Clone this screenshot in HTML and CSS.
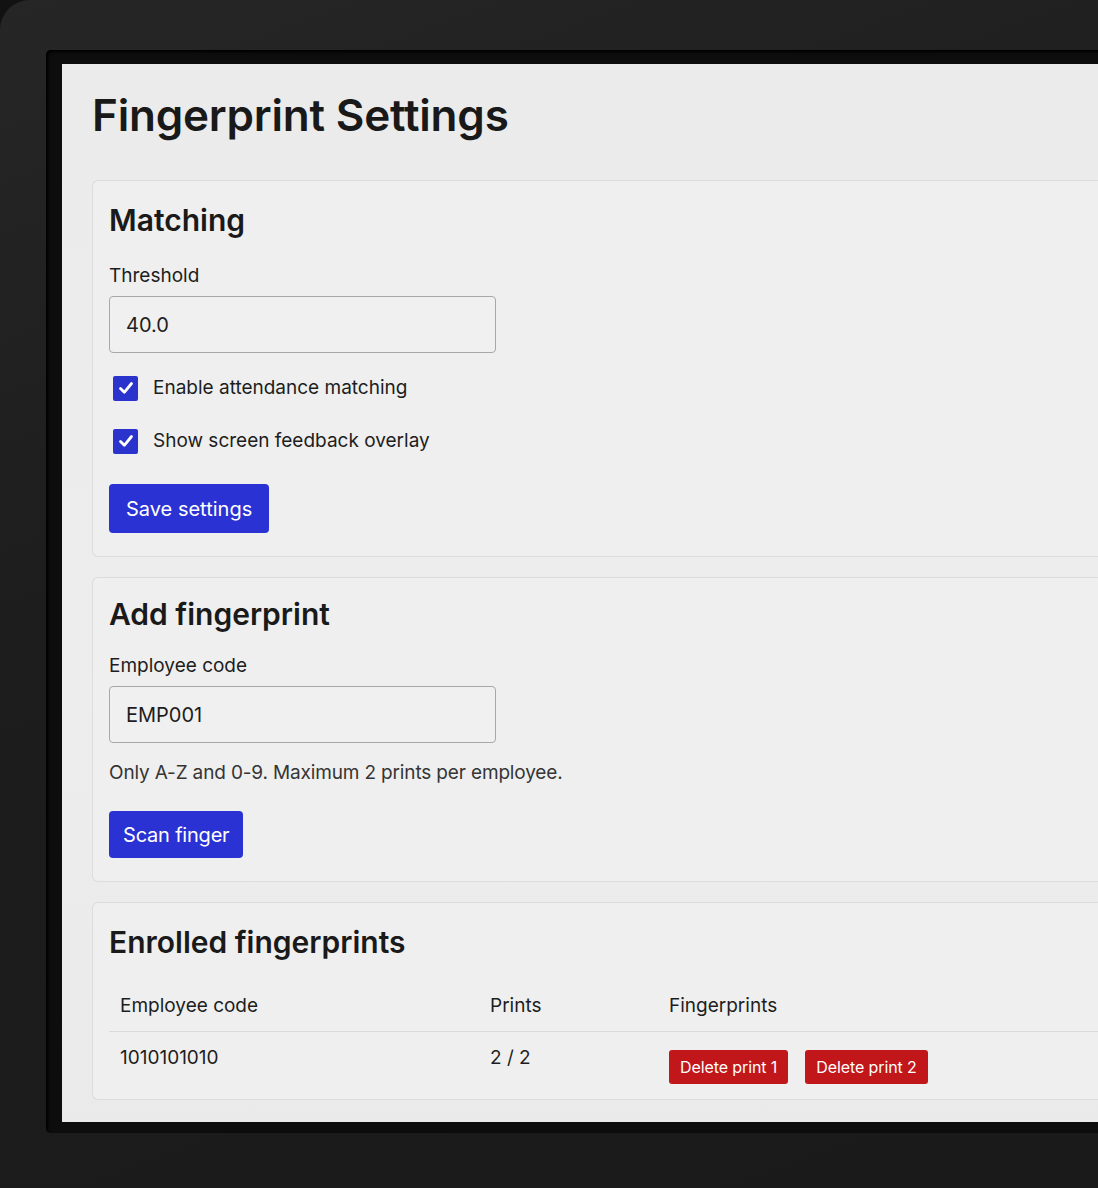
FILE: index.html
```html
<!DOCTYPE html>
<html lang="en">
<head>
    <meta charset="utf-8" />
    <title>Fingerprint Settings</title>
    <link rel="stylesheet" href="styles.css">
</head>
<body>
<div class="monitor">
    <div class="recess">
        <main class="screen">
            <h1 class="page-title">Fingerprint Settings</h1>

            <section class="card card-matching">
                <h2>Matching</h2>
                <label class="field-label" for="threshold">Threshold</label>
                <input class="text-input" id="threshold" type="text" value="40.0">
                <label class="check-row first">
                    <span class="check-box">
                        <svg width="18" height="18" viewBox="0 0 18 18">
                            <path d="M3.5 9.5 L7.3 13.3 L14.5 4.5" fill="none" stroke="#fff"
                                  stroke-width="2.8" stroke-linecap="round" stroke-linejoin="round"/>
                        </svg>
                    </span>
                    Enable attendance matching
                </label>
                <label class="check-row">
                    <span class="check-box">
                        <svg width="18" height="18" viewBox="0 0 18 18">
                            <path d="M3.5 9.5 L7.3 13.3 L14.5 4.5" fill="none" stroke="#fff"
                                  stroke-width="2.8" stroke-linecap="round" stroke-linejoin="round"/>
                        </svg>
                    </span>
                    Show screen feedback overlay
                </label>
                <button class="btn btn-primary btn-save">Save settings</button>
            </section>

            <section class="card card-add">
                <h2>Add fingerprint</h2>
                <label class="field-label" for="emp-code">Employee code</label>
                <input class="text-input" id="emp-code" type="text" value="EMP001">
                <p class="hint">Only A-Z and 0-9. Maximum 2 prints per employee.</p>
                <button class="btn btn-primary btn-scan">Scan finger</button>
            </section>

            <section class="card card-table">
                <h2>Enrolled fingerprints</h2>
                <table class="prints">
                    <thead>
                        <tr>
                            <th class="col-code">Employee code</th>
                            <th class="col-prints">Prints</th>
                            <th>Fingerprints</th>
                        </tr>
                    </thead>
                    <tbody>
                        <tr>
                            <td>1010101010</td>
                            <td>2 / 2</td>
                            <td class="actions">
                                <button class="btn btn-danger">Delete print 1</button>
                                <button class="btn btn-danger">Delete print 2</button>
                            </td>
                        </tr>
                    </tbody>
                </table>
            </section>
        </main>
    </div>
</div>
</body>
</html>
```
FILE: styles.css
```css
html, body {
    margin: 0;
    height: 100%;
    overflow: hidden;
    background: #121212;
}
body {
    font-family: Inter, "Liberation Sans", sans-serif;
    color: #1d1d1d;
}

/* monitor bezel around the screen */
.monitor {
    height: 1188px;
    padding: 50px 0 0 46px;
    box-sizing: border-box;
    background: linear-gradient(160deg, #262626 0%, #1d1d1d 40%, #1a1a1a 100%);
    border-top-left-radius: 30px;
}
.recess {
    width: 1120px;
    padding: 14px 0 11px 16px;
    background: #0d0d0d;
    border-radius: 5px 0 0 5px;
    box-shadow: inset 2px 2px 3px #000;
}
.screen {
    display: block;
    height: 1058px;
    box-sizing: border-box;
    padding: 25px 0 0 30px;
    background: linear-gradient(180deg, #ebebeb 0%, #ededed 60%, #eaeaea 100%);
    overflow: hidden;
}

.page-title {
    margin: 0 0 38px;
    font-size: 44px;
    line-height: 53px;
    font-weight: 600;
    letter-spacing: -0.2px;
    color: #191919;
}

.card {
    margin-bottom: 20px;
    padding: 18px 0 23px 16px;
    background: #efefef;
    border: 1px solid #dcdcdc;
    border-right: none;
    border-radius: 6px 0 0 6px;
}
.card-matching { padding-top: 21px; }
.card h2 {
    margin: 0 0 26px;
    font-size: 30px;
    line-height: 36px;
    font-weight: 600;
    color: #1a1a1a;
}
.card-add h2 { margin-bottom: 22px; }

.field-label {
    display: block;
    margin-bottom: 8px;
    font-size: 19px;
    line-height: 24px;
}
.text-input {
    display: block;
    width: 387px;
    height: 57px;
    box-sizing: border-box;
    padding: 0 16px;
    border: 1px solid #a8a8a8;
    border-radius: 4px;
    background: #f0f0f0;
    font: 20px Inter, "Liberation Sans", sans-serif;
    color: #1d1d1d;
}

.check-row {
    display: flex;
    align-items: center;
    gap: 15px;
    margin-top: 27px;
    padding-left: 4px;
    font-size: 19px;
    line-height: 26px;
}
.check-row.first { margin-top: 22px; }
.check-box {
    display: flex;
    align-items: center;
    justify-content: center;
    width: 25px;
    height: 25px;
    border-radius: 2px;
    background: #2a33cc;
}

.btn {
    border: none;
    border-radius: 4px;
    color: #fff;
    font-family: Inter, "Liberation Sans", sans-serif;
    cursor: pointer;
}
.btn-primary {
    background: #2b32d4;
    font-size: 20px;
    padding: 0 17px;
}
.btn-save {
    display: block;
    margin-top: 30px;
    height: 49px;
}
.btn-scan {
    display: block;
    margin-top: 26px;
    height: 47px;
    padding: 0 14px;
    letter-spacing: -0.2px;
}

.hint {
    margin: 18px 0 0;
    font-size: 19px;
    line-height: 24px;
    letter-spacing: -0.15px;
    color: #353535;
}

.card-table {
    padding-top: 21px;
    padding-bottom: 0;
    padding-left: 16px;
}
.card-table h2 { margin-bottom: 22px; }
.prints {
    width: 100%;
    border-collapse: collapse;
    font-size: 19px;
    line-height: 24px;
}
.prints th {
    padding: 12px 10px 13px 11px;
    text-align: left;
    font-weight: 400;
    border-bottom: 1px solid #dadada;
}
.prints td {
    padding: 14px 10px 15px 11px;
    vertical-align: top;
}
.col-code { width: 349px; }
.col-prints { width: 158px; }
.actions {
    display: flex;
    gap: 17px;
}
.btn-danger {
    margin-top: 4px;
    height: 34px;
    padding: 0 11px;
    background: #c1161a;
    font-size: 16px;
    letter-spacing: -0.1px;
    border-radius: 3px;
}
```
